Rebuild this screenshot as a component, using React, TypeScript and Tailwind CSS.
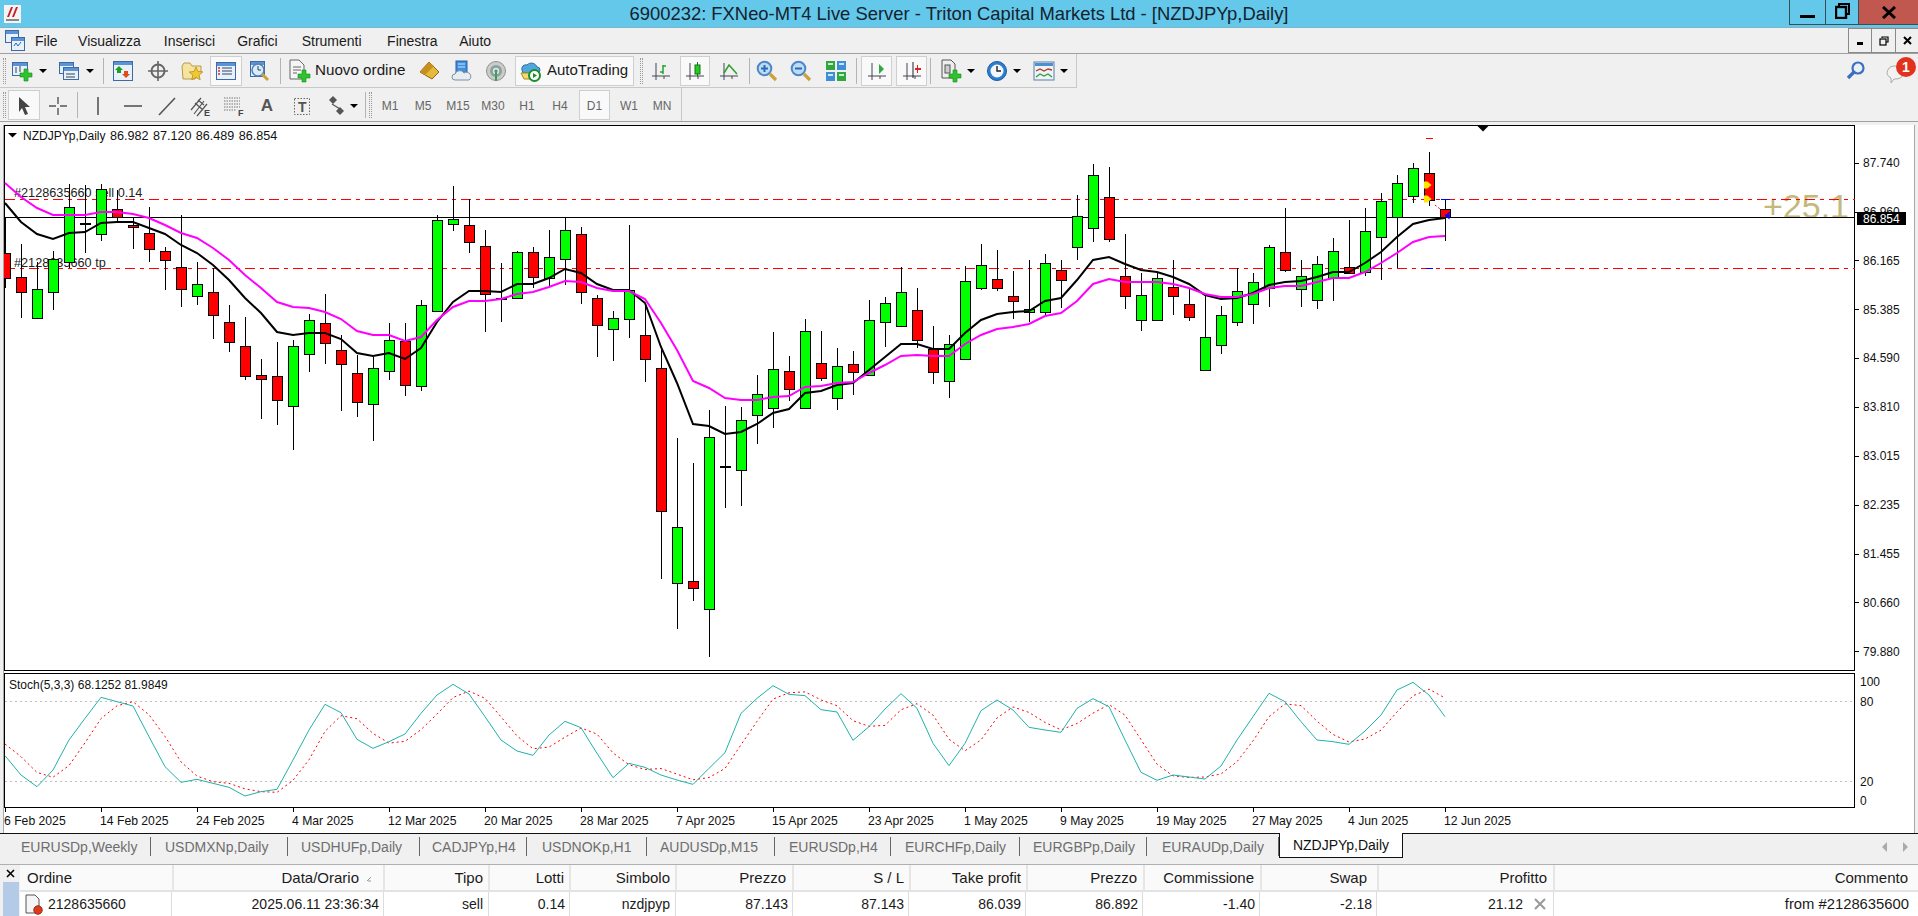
import React from "react";

type C = ["g" | "r" | "d", number, number, number, number];
const candles: C[] = [
  ["r",253,278,218,288],["r",277,292,244,318],["g",289,318,262,319],["g",259,292,251,310],["g",207,262,184,268],["d",224,224,185,253],["g",189,234,184,241],["r",209,217,190,222],["r",225,227,218,249],["r",233,249,207,262],
  ["r",251,260,247,290],["r",267,289,215,307],["g",284,296,262,305],["r",292,315,268,339],["r",322,342,305,352],["r",346,376,317,380],["r",375,379,359,419],["r",376,400,342,425],["g",346,406,340,450],["g",320,354,314,372],
  ["r",323,343,294,364],["r",350,364,335,411],["r",373,402,355,417],["g",368,404,357,441],["g",340,371,323,380],["r",341,385,323,396],["g",305,386,300,391],["g",220,311,215,311],["g",219,224,186,231],["r",225,242,199,253],
  ["r",246,294,230,332],["d",299,299,263,322],["g",252,298,251,298],["r",252,277,247,288],["g",257,278,230,287],["g",230,259,218,285],["r",234,292,227,304],["r",298,325,295,357],["g",318,329,311,361],["g",290,319,225,338],
  ["r",335,359,303,382],["r",368,511,350,579],["g",527,583,438,629],["r",581,588,463,601],["g",437,609,410,657],["d",467,467,406,508],["g",420,470,407,506],["g",394,415,375,444],["g",369,408,332,428],["r",371,389,356,401],
  ["g",331,408,319,409],["r",363,378,331,381],["g",366,398,348,410],["r",364,372,351,395],["g",320,375,300,376],["g",303,322,297,347],["g",292,326,267,326],["r",310,340,288,348],["r",349,372,326,384],["g",344,381,335,398],
  ["g",281,359,266,359],["g",265,288,244,290],["r",279,288,250,291],["r",296,301,271,319],["g",309,312,260,322],["g",263,312,254,315],["r",270,280,260,308],["g",216,247,195,260],["g",175,228,164,242],["r",197,239,167,242],
  ["r",276,296,234,309],["g",295,320,273,331],["g",278,320,273,320],["r",287,296,260,315],["r",304,317,288,321],["g",337,370,296,370],["g",315,345,306,354],["g",291,322,268,326],["g",282,304,273,324],["g",247,288,245,307],
  ["r",252,270,208,272],["g",276,289,260,307],["g",264,300,256,309],["g",251,278,238,301],["r",267,273,220,273],["g",231,272,208,276],["g",201,237,193,280],["g",183,217,175,268],["g",168,196,163,203],["r",173,200,152,206],
  ["r",209,217,200,241],
];
const ma1 = [203,222,234,239,233,232,223,222,222,228,234,245,253,265,280,298,313,332,335,333,333,339,353,356,353,359,348,322,302,291,291,292,284,284,278,269,273,284,290,290,303,347,383,424,426,434,432,424,413,409,393,391,385,383,370,357,344,344,349,349,333,320,314,312,311,301,298,280,260,257,264,270,272,277,284,295,299,298,293,285,282,281,277,272,272,263,252,237,224,220,218];
const ma2 = [183,197,208,215,215,215,212,212,214,218,225,233,238,248,260,275,288,302,307,308,312,319,331,335,335,341,337,320,307,301,301,299,294,292,287,281,282,288,291,291,299,323,350,381,388,398,400,400,397,396,387,386,383,382,373,365,356,355,356,356,344,335,329,327,324,316,313,301,284,279,282,282,282,284,288,294,297,297,294,288,286,286,282,278,278,272,263,253,242,237,236];
const stoch = [231,238,287,345,380,330,240,175,112,125,138,230,320,367,358,370,382,408,395,388,300,210,133,158,238,265,245,222,160,105,73,102,170,240,273,286,225,184,203,280,353,310,322,345,360,373,325,278,160,115,77,103,107,149,156,241,200,147,101,145,250,317,250,152,120,150,202,210,217,145,116,140,240,337,361,345,351,357,318,240,170,100,125,185,240,245,253,213,165,90,67,105,170];
const bx = (i: number) => 5 + 16 * i;
const toPts = (a: number[]) => a.map((y, i) => `${bx(i)},${y}`).join(" ");
const kLine = stoch.slice(2).map((v, i) => `${bx(i)},${660 + v / 3}`).join(" ");
const dLine = stoch.slice(2).map((_, i) => `${bx(i)},${660 + (stoch[i] + stoch[i + 1] + stoch[i + 2]) / 9}`).join(" ");
const prices = ["87.740","86.960","86.165","85.385","84.590","83.810","83.015","82.235","81.455","80.660","79.880"];
const dates = ["6 Feb 2025","14 Feb 2025","24 Feb 2025","4 Mar 2025","12 Mar 2025","20 Mar 2025","28 Mar 2025","7 Apr 2025","15 Apr 2025","23 Apr 2025","1 May 2025","9 May 2025","19 May 2025","27 May 2025","4 Jun 2025","12 Jun 2025"];

function Chart() {
  return (
    <svg width="1910" height="708" viewBox="4 125 1910 708" className="block bg-white">
      <rect x="4.5" y="125.5" width="1850" height="545" fill="none" stroke="#000" shapeRendering="crispEdges" />
      <rect x="4.5" y="673.5" width="1850" height="134" fill="none" stroke="#000" shapeRendering="crispEdges" />
      <text x="23" y="140" fontSize="12" fill="#111">NZDJPYp,Daily</text>
      <text x="110" y="140" fontSize="12.6" fill="#111" wordSpacing="0.9">86.982 87.120 86.489 86.854</text>
      <path d="M8 133h9l-4.5 4.5z" fill="#000" />
      <path d="M1477.5 126h11l-5.5 5.5z" fill="#000" />
      <text x="14" y="197" fontSize="12.7" fill="#222">#2128635660 sell 0.14</text>
      <text x="14" y="267" fontSize="12.7" fill="#222">#2128635660 tp</text>
      <text x="1763" y="218" fontSize="34" fill="#c4b97a">+25.1</text>
      <g shapeRendering="crispEdges">
        <line x1="5" x2="1855" y1="199.5" y2="199.5" stroke="#f00" strokeDasharray="10 5 4 5" />
        <line x1="5" x2="1855" y1="268.5" y2="268.5" stroke="#f00" strokeDasharray="10 5 4 5" />
        <line x1="5" x2="1855" y1="217.5" y2="217.5" stroke="#000" />
        {candles.map((c, i) => {
          const x = bx(i);
          return (
            <g key={i}>
              <line x1={x + 0.5} x2={x + 0.5} y1={c[3]} y2={c[4]} stroke="#000" />
              {c[0] === "d" ? (
                <rect x={x - 5} y={c[1] - 1} width="11" height="2" fill="#000" />
              ) : (
                <rect x={x - 4.5} y={c[1] + 0.5} width="10" height={Math.max(c[2] - c[1], 1)} fill={c[0] === "g" ? "#00ff00" : "#ff0000"} stroke="#000" />
              )}
            </g>
          );
        })}
        <rect x="1426" y="138" width="7" height="1" fill="#f00" />
        <rect x="1441" y="199" width="9" height="1" fill="#00f" />
        <rect x="1426" y="268" width="7" height="1" fill="#00f" />
      </g>
      <polyline points={toPts(ma1)} fill="none" stroke="#000" strokeWidth="2" />
      <polyline points={toPts(ma2)} fill="none" stroke="#ff00ff" strokeWidth="2" />
      <path d="M1424 181.5h3.5l4 3.5-4 3.5H1424z" fill="#ffe600" />
      <path d="M1424 195.5h3.5l4 3.5-4 3.5H1424z" fill="#ffe600" />
      <line x1="1435" y1="205" x2="1444" y2="212" stroke="#f00" strokeDasharray="2 2" />
      <path d="M1444.5 215.5l5-4v8z" fill="#00f" />
      <g shapeRendering="crispEdges">
        {prices.map((p, k) => (
          <rect key={p} x="1855" y={Math.round(162.7 + 48.85 * k)} width="4" height="1" fill="#000" />
        ))}
      </g>
      {prices.map((p, k) => (
        <text key={p} x="1863" y={167 + 48.85 * k} fontSize="12" fill="#111">{p}</text>
      ))}
      <rect x="1857" y="212" width="49" height="13" fill="#000" />
      <text x="1863" y="223" fontSize="12" fill="#fff">86.854</text>

      <text x="9" y="689" fontSize="12" fill="#111">Stoch(5,3,3) 68.1252 81.9849</text>
      <g shapeRendering="crispEdges">
        <line x1="5" x2="1855" y1="701.5" y2="701.5" stroke="#c0c0c0" strokeDasharray="2 3" />
        <line x1="5" x2="1855" y1="781.5" y2="781.5" stroke="#c0c0c0" strokeDasharray="2 3" />
      </g>
      <polyline points={dLine} fill="none" stroke="#f00" strokeWidth="1" strokeDasharray="2 3" />
      <polyline points={kLine} fill="none" stroke="#20b2aa" strokeWidth="1" />
      {[["100",686],["80",705.5],["20",785.5],["0",805]].map(([t, y]) => (
        <text key={t} x="1860" y={y} fontSize="12" fill="#111">{t}</text>
      ))}
      {dates.map((d, k) => (
        <g key={d}>
          <rect x={5 + 96 * k} y="808" width="1" height="4" fill="#000" />
          <text x={4 + 96 * k} y="824.5" fontSize="12.2" fill="#111">{d}</text>
        </g>
      ))}
    </svg>
  );
}

const Ic = ({ children, w = 22, h = 22 }: { children: React.ReactNode; w?: number; h?: number }) => (
  <svg width={w} height={h} viewBox={`0 0 ${w} ${h}`}>{children}</svg>
);
const Plus = ({ x, y }: { x: number; y: number }) => (
  <path transform={`translate(${x} ${y})`} d="M4 0h4v4h4v4H8v4H4V8H0V4h4z" fill="#2fc42f" stroke="#118a11" strokeWidth=".6" />
);
const Win = ({ x, y, w, h }: { x: number; y: number; w: number; h: number }) => (
  <g>
    <rect x={x + 0.5} y={y + 0.5} width={w} height={h} fill="#e8f1fb" stroke="#3d6aa5" />
    <rect x={x + 1} y={y + 1} width={w - 1} height="3" fill="#5b93d5" />
  </g>
);
const Arrow = () => <span className="w-0 h-0 border-x-[4px] border-x-transparent border-t-[4px] border-t-black" />;
const Bars = () => (
  <g stroke="#445" fill="none"><path d="M6 3v15M2 16h18M14 16v3M6 18v2" /></g>
);

const NewChart = () => <Ic><Win x={1} y={2} w={15} h={13} /><path d="M5 7v6M9 6v6" stroke="#345" /><Plus x={9} y={9} /></Ic>;
const Profiles = () => <Ic><Win x={1} y={2} w={14} h={11} /><Win x={5} y={7} w={15} h={12} /><path d="M8 14h9M8 17h9" stroke="#345" /></Ic>;
const Market = () => <Ic><Win x={1} y={1} w={19} h={19} /><path d="M7 6l4 4H9v3H5v-3H3z" fill="#1fa01f" /><path d="M14 18l-4-4h2v-3h4v3h2z" fill="#e64a1a" /></Ic>;
const Navigator = () => <Ic><circle cx="11" cy="11" r="6.5" fill="none" stroke="#666" strokeWidth="2" /><path d="M11 1v20M1 11h20" stroke="#666" strokeWidth="1.6" /></Ic>;
const Folder = () => <Ic><path d="M1 6l2-3h6l2 3h9v6l-6 7H2z" fill="#f7e3a0" stroke="#b89a45" /><path d="M15 7l2 4.4 4.8.5-3.6 3.2 1 4.7-4.2-2.4-4.2 2.4 1-4.7L8.2 12l4.8-.5z" fill="#f2c731" stroke="#a8861c" strokeWidth=".7" /></Ic>;
const Terminal = () => <Ic><Win x={1} y={2} w={19} h={17} /><path d="M3 8h2M3 11h2M3 14h2" stroke="#c33" strokeWidth="1.4" /><path d="M7 8h10M7 11h10M7 14h10" stroke="#346" /></Ic>;
const ClockMag = () => <Ic><Win x={2} y={1} w={14} h={15} /><circle cx="10" cy="10" r="6" fill="#d8ecfb" stroke="#4f7fb5" strokeWidth="1.5" /><path d="M10 6v4h3" stroke="#345" fill="none" /><path d="M14 14l6 6" stroke="#c9a23a" strokeWidth="3" /></Ic>;
const NewOrder = () => <Ic w={24} h={24}><path d="M3 1h9l5 5v14H3z" fill="#f5f5f5" stroke="#666" /><path d="M6 8h8M6 11h8M6 14h4" stroke="#666" /><Plus x={11} y={11} /></Ic>;
const Gold = () => <Ic><path d="M11 2l10 10-7 7L2 12z" fill="#e6b93a" stroke="#8a651a" /><path d="M11 2l-9 10 5 3 9-9z" fill="#c98f1d" /></Ic>;
const Cloud = () => <Ic><rect x="5" y="1" width="11" height="14" fill="#3f8fe0" stroke="#2a5f9f" /><path d="M7 4h7M7 7h7" stroke="#cfe6fb" /><path d="M4 20a3 3 0 010-6 5 5 0 019-1 4 4 0 015 7z" fill="#e9edf2" stroke="#7890a8" /></Ic>;
const Signal = () => <Ic><circle cx="11" cy="11" r="9.5" fill="#c9cdc9" stroke="#8f948f" /><circle cx="11" cy="11" r="6" fill="#8fa09a" /><circle cx="11" cy="11" r="3.2" fill="#d8e8e0" /><circle cx="11" cy="11" r="1.6" fill="#3f8f9f" /><path d="M11 12v9" stroke="#35a05a" strokeWidth="2" /></Ic>;
const Auto = () => <Ic><path d="M3 10a4 4 0 015-5 6 6 0 0110 2 3 3 0 010 6H4z" fill="#4fa8dc" stroke="#2a6e9f" /><path d="M2 13l3 6h8l3-6z" fill="#f5d96a" stroke="#a88a25" /><circle cx="15.5" cy="15.5" r="5.5" fill="#fff" stroke="#1a8f2f" strokeWidth="2" /><path d="M14 13l4 2.5-4 2.5z" fill="#1a8f2f" /></Ic>;
const BarCh = () => <Ic><Bars /><path d="M13 5v9M13 6h3M13 12h-3" stroke="#2a9f2a" strokeWidth="1.5" /></Ic>;
const Candle = () => <Ic><Bars /><rect x="11" y="5" width="5" height="9" fill="#1fd01f" stroke="#1a6e1a" /><path d="M13.5 2v3M13.5 14v2" stroke="#1a6e1a" /></Ic>;
const LineCh = () => <Ic><Bars /><path d="M6 13l5-8 8 9" fill="none" stroke="#2a9f2a" strokeWidth="1.5" /></Ic>;
const Zoom = ({ plus }: { plus?: boolean }) => <Ic><circle cx="8.5" cy="8.5" r="6.8" fill="#bcdcf5" stroke="#4f86c8" strokeWidth="2" /><path d="M5 8.5h7" stroke="#2a6ab5" strokeWidth="2" />{plus && <path d="M8.5 5v7" stroke="#2a6ab5" strokeWidth="2" />}<path d="M14 14l6 6" stroke="#c9a23a" strokeWidth="3.2" /></Ic>;
const Tile = () => <Ic><rect x="1" y="1" width="9" height="9" fill="#2fa83f" /><rect x="12" y="1" width="9" height="9" fill="#3f8fd8" /><rect x="1" y="12" width="9" height="9" fill="#3f8fd8" /><rect x="12" y="12" width="9" height="9" fill="#2fa83f" /><path d="M3 4h5M14 4h5M3 15h5M14 15h5" stroke="#fff" strokeWidth="1.4" /></Ic>;
const Shift = () => <Ic><Bars /><path d="M13 4l5 5-5 5z" fill="#2fa83f" /></Ic>;
const AutoS = () => <Ic><Bars /><path d="M12 2v16" stroke="#223" /><path d="M14 8h2V5h1v3h3v2h-3v3h-1v-3h-2z" fill="#e02020" /></Ic>;
const Clock = () => <Ic><circle cx="11" cy="11" r="9.5" fill="#2a7fd0" stroke="#1a5a9f" /><circle cx="11" cy="11" r="6.5" fill="#f4f8fc" /><path d="M11 6v5h4" fill="none" stroke="#222" strokeWidth="1.4" /></Ic>;
const Tpl = () => <Ic><rect x="1" y="2" width="20" height="18" fill="#eef3f8" stroke="#5a7fa8" /><rect x="2" y="3" width="18" height="3" fill="#4f8fd0" /><path d="M3 11l4-2 4 2 4-2 4 1" fill="none" stroke="#b03a2a" strokeWidth="1.3" /><path d="M3 17l4-3 4 2 4-2 4 3" fill="none" stroke="#2a9f3a" strokeWidth="1.3" /></Ic>;
const NewDoc = () => <Ic w={22} h={24}><path d="M2 1h9l4 4v14H2z" fill="#eee" stroke="#555" /><rect x="5" y="6" width="5" height="8" fill="#ccc" stroke="#555" /><Plus x={9} y={11} /></Ic>;

const BG = "flex items-center justify-center h-[30px]";
const BG2 = "flex items-center justify-center h-[30px] pt-[3px]";
const Grip = ({ cl }: { cl: string }) => <span className={`w-[3px] h-[26px] border-x border-dotted border-[#9a9a9a] ${cl}`} />;
const Sep = ({ cl }: { cl: string }) => <span className={`w-px h-[26px] bg-[#b4b4b4] ${cl}`} />;
const pressed = "bg-[#f9f9f9] border border-[#cfcfcf]";
const Tf = ({ t, cl }: { t: string; cl: string }) => (
  <span className={`flex items-center justify-center h-[30px] pt-[2px] text-[12px] text-[#666] ${cl}`}>{t}</span>
);
const G = "#555";

const tabs: [string, string][] = [
  ["EURUSDp,Weekly","w-[147px] pl-[17px]"],["USDMXNp,Daily","w-[137px] pl-[14px]"],["USDHUFp,Daily","w-[132px] pl-[13px]"],["CADJPYp,H4","w-[107px] pl-[12px]"],["USDNOKp,H1","w-[120px] pl-[15px]"],["AUDUSDp,M15","w-[128px] pl-[13px]"],["EURUSDp,H4","w-[116px] pl-[14px]"],["EURCHFp,Daily","w-[129px] pl-[14px]"],["EURGBPp,Daily","w-[127px] pl-[13px]"],["EURAUDp,Daily","w-[132px] pl-[15px]"],
];
const HC = "flex items-center justify-end pt-[2px] border-r-[2px] border-[#e6e6e6]";
const RC = "flex items-center justify-end border-r border-[#dcdcdc]";

export default function App() {
  return (
    <div className="w-screen h-screen overflow-hidden flex flex-col bg-[#f0f0f0] text-[14px] text-[#1a1a1a] [font-family:'Liberation_Sans',Arial,sans-serif]">
      {/* Title bar */}
      <div className="h-[28px] shrink-0 grid grid-cols-[1fr_auto_1fr] bg-[#63c8ea] border-b border-[#7fb4c8]">
        <div className="flex items-center pl-[4px]">
          <svg width="17" height="18" viewBox="0 0 17 18"><rect width="17" height="18" fill="#f4f4f4" /><path d="M3 12L7 2h2L5 12zM8 12l4-10h2l-4 10z" fill="#c8202a" /><rect x="2" y="14" width="13" height="2" fill="#888" /></svg>
        </div>
        <div className="flex items-center text-[18.4px] text-[#14232e] whitespace-nowrap">6900232: FXNeo-MT4 Live Server - Triton Capital Markets Ltd - [NZDJPYp,Daily]</div>
        <div className="flex justify-end items-start">
          <span className="w-[36px] h-[25px] border-l border-b border-[#3b4d58] flex items-end justify-center pb-[6px]"><span className="w-[15px] h-[3px] bg-black" /></span>
          <span className="w-[33px] h-[25px] border-l border-b border-[#3b4d58] flex items-start justify-center pt-[3px]">
            <svg width="15" height="16" viewBox="0 0 15 16"><path d="M4 3V1h10v10h-3" fill="none" stroke="#000" strokeWidth="2" /><rect x="1" y="4" width="10" height="11" fill="none" stroke="#000" strokeWidth="2.4" /></svg>
          </span>
          <span className="w-[60px] h-[25px] border-l border-b border-[#3b4d58] bg-[#c0584f] flex items-center justify-center">
            <svg width="14" height="13" viewBox="0 0 14 13"><path d="M1 1l12 11M13 1L1 12" stroke="#000" strokeWidth="3" /></svg>
          </span>
        </div>
      </div>
      {/* Menu */}
      <div className="h-[26px] shrink-0 flex items-center border-b border-[#a0a0a0]">
        <svg className="ml-[5px]" width="20" height="21" viewBox="0 0 20 21"><Win x={0} y={0} w={13} h={12} /><Win x={6} y={7} w={13} h={13} /><path d="M9 16l2-3 2 3 3-4" fill="none" stroke="#2a6ab5" /></svg>
        <span className="ml-[10px] pt-[2px]">File</span>
        <span className="ml-[20.5px] pt-[2px]">Visualizza</span>
        <span className="ml-[23px] pt-[2px]">Inserisci</span>
        <span className="ml-[22px] pt-[2px]">Grafici</span>
        <span className="ml-[24px] pt-[2px]">Strumenti</span>
        <span className="ml-[25.5px] pt-[2px]">Finestra</span>
        <span className="ml-[21.5px] pt-[2px]">Aiuto</span>
        <div className="ml-auto flex h-[25px] self-start">
          <span className="w-[24px] border border-[#8a8a8a] flex items-end justify-center pb-[7px]"><span className="w-[6px] h-[3px] bg-black" /></span>
          <span className="w-[24px] border-y border-r border-[#8a8a8a] flex items-center justify-center">
            <svg width="10" height="10" viewBox="0 0 10 10"><path d="M3 2V1h6v5H7" fill="none" stroke="#000" strokeWidth="1.2" /><rect x="1" y="3" width="6" height="6" fill="none" stroke="#000" strokeWidth="1.2" /></svg>
          </span>
          <span className="w-[22px] border-y border-[#8a8a8a] flex items-center justify-center">
            <svg width="9" height="9" viewBox="0 0 9 9"><path d="M1 1l7 7M8 1L1 8" stroke="#000" strokeWidth="2" /></svg>
          </span>
        </div>
      </div>
      {/* Toolbar 1 */}
      <div className="h-[34px] shrink-0 flex">
        <div className="w-[1077px] flex items-center border-r border-b border-[#c8c8c8]">
          <Grip cl="ml-[3px]" />
          <span className={`${BG} ml-[2px] w-[28px]`}><NewChart /></span>
          <span className={`${BG} w-[14px]`}><Arrow /></span>
          <span className={`${BG} ml-[4px] w-[30px]`}><Profiles /></span>
          <span className={`${BG} w-[12px]`}><Arrow /></span>
          <Sep cl="ml-[7px]" />
          <span className={`${BG} ml-[4px] w-[30px]`}><Market /></span>
          <span className={`${BG} ml-[5px] w-[30px]`}><Navigator /></span>
          <span className={`${BG} ml-[4px] w-[30px]`}><Folder /></span>
          <span className={`${BG} ml-[3px] w-[32px] ${pressed}`}><Terminal /></span>
          <span className={`${BG} ml-[2px] w-[30px]`}><ClockMag /></span>
          <Sep cl="ml-[6px]" />
          <span className={`${BG} ml-[4px] w-[125px] justify-start text-[15.2px] whitespace-nowrap`}><span className="ml-[2px] mr-[4px] flex"><NewOrder /></span>Nuovo ordine</span>
          <span className={`${BG} ml-[4px] w-[30px]`}><Gold /></span>
          <span className={`${BG} ml-[3px] w-[30px]`}><Cloud /></span>
          <span className={`${BG} ml-[4px] w-[30px]`}><Signal /></span>
          <span className={`${BG} ml-[4px] w-[119px] justify-start text-[15px] whitespace-nowrap ${pressed}`}><span className="ml-[3px] mr-[6px] flex"><Auto /></span>AutoTrading</span>
          <Grip cl="ml-[6px]" />
          <span className={`${BG} ml-[3px] w-[30px]`}><BarCh /></span>
          <span className={`${BG} ml-[4px] w-[30px] ${pressed}`}><Candle /></span>
          <span className={`${BG} ml-[4px] w-[30px]`}><LineCh /></span>
          <Sep cl="ml-[5px]" />
          <span className={`${BG} ml-[2px] w-[30px]`}><Zoom plus /></span>
          <span className={`${BG} ml-[4px] w-[30px]`}><Zoom /></span>
          <span className={`${BG} ml-[5px] w-[30px]`}><Tile /></span>
          <Sep cl="ml-[5px]" />
          <span className={`${BG} ml-[4px] w-[31px] ${pressed}`}><Shift /></span>
          <span className={`${BG} ml-[4px] w-[31px] ${pressed}`}><AutoS /></span>
          <Sep cl="ml-[3px]" />
          <span className={`${BG} ml-[5px] w-[30px]`}><NewDoc /></span>
          <span className={`${BG} w-[10px]`}><Arrow /></span>
          <span className={`${BG} ml-[6px] w-[30px]`}><Clock /></span>
          <span className={`${BG} w-[10px]`}><Arrow /></span>
          <span className={`${BG} ml-[7px] w-[30px]`}><Tpl /></span>
          <span className={`${BG} w-[10px]`}><Arrow /></span>
        </div>
        <div className="flex-1 flex items-center justify-end">
          <svg className="mr-[20px]" width="20" height="22" viewBox="0 0 20 22"><circle cx="12" cy="8" r="5.5" fill="#e8f1fb" stroke="#3d6fc0" strokeWidth="2.2" /><path d="M8 12l-6 6" stroke="#3d6fc0" strokeWidth="3.4" /></svg>
          <span className="relative w-[30px] h-[30px] mr-[2px]">
            <svg className="absolute left-0 top-[8px]" width="22" height="22" viewBox="0 0 22 22"><path d="M10 2a8 6.5 0 010 13H8l-3 4v-5A8 6.5 0 0110 2z" fill="#f2f2f2" stroke="#aaa" /></svg>
            <span className="absolute right-0 top-[1px] w-[20px] h-[20px] rounded-full bg-[#e2321e] text-white text-[14px] font-bold flex items-center justify-center">1</span>
          </span>
        </div>
      </div>
      {/* Toolbar 2 */}
      <div className="h-[33px] shrink-0 flex">
        <div className="w-[682px] flex items-center border-r border-[#c8c8c8]">
          <Grip cl="ml-[3px]" />
          <span className={`${BG2} ml-[2px] w-[32px] ${pressed}`}><Ic><path d="M6 2l11 10h-5l3 7-3 1-3-7-3 4z" fill="#444" /></Ic></span>
          <span className={`${BG2} ml-[2px] w-[32px]`}><Ic><path d="M11 2v7M11 13v7M2 11h7M13 11h7" stroke={G} strokeWidth="1.4" /></Ic></span>
          <Sep cl="ml-[3px]" />
          <span className={`${BG2} ml-[5px] w-[30px]`}><Ic><path d="M11 2v18" stroke={G} strokeWidth="1.6" /></Ic></span>
          <span className={`${BG2} ml-[5px] w-[30px]`}><Ic><path d="M2 11h18" stroke={G} strokeWidth="1.6" /></Ic></span>
          <span className={`${BG2} ml-[4px] w-[30px]`}><Ic><path d="M3 20L19 3" stroke={G} strokeWidth="1.6" /></Ic></span>
          <span className={`${BG2} ml-[3px] w-[30px]`}><Ic><path d="M2 15L12 3M5 19L15 6M8 21L18 9M6 8l8 7M9 5l6 5" stroke={G} strokeWidth="1.2" fill="none" /><text x="15" y="21" fontSize="9" fontWeight="700" fill="#444">E</text></Ic></span>
          <span className={`${BG2} ml-[4px] w-[30px]`}><Ic><path d="M1 3h16M1 6h16M1 9h16M1 12h16M1 15h12" stroke="#777" strokeDasharray="1.5 1" /><text x="15" y="21" fontSize="9" fontWeight="700" fill="#444">F</text></Ic></span>
          <span className={`${BG2} ml-[3px] w-[30px] text-[17px] font-bold text-[#555]`}>A</span>
          <span className={`${BG2} ml-[5px] w-[30px]`}><Ic><rect x="3.5" y="3.5" width="15" height="16" fill="none" stroke="#666" strokeDasharray="1.5 1.5" /><text x="7" y="17" fontSize="14" fontWeight="700" fill="#555">T</text></Ic></span>
          <span className={`${BG2} ml-[7px] w-[24px]`}><Ic><path d="M8 1l4 4-4 4-4-4zM15 12l4 4-4 4-4-4z" fill="#555" /><path d="M7 9l8 5" stroke="#555" strokeWidth="1.2" /></Ic></span>
          <span className={`${BG2} ml-[1px] w-[10px]`}><Arrow /></span>
          <Sep cl="ml-[6px]" />
          <Grip cl="ml-[3px]" />
          <Tf t="M1" cl="ml-[3px] w-[30px]" />
          <Tf t="M5" cl="ml-[3px] w-[30px]" />
          <Tf t="M15" cl="ml-[5px] w-[30px]" />
          <Tf t="M30" cl="ml-[5px] w-[30px]" />
          <Tf t="H1" cl="ml-[4px] w-[30px]" />
          <Tf t="H4" cl="ml-[3px] w-[30px]" />
          <Tf t="D1" cl={`ml-[4px] w-[31px] ${pressed}`} />
          <Tf t="W1" cl="ml-[4px] w-[30px]" />
          <Tf t="MN" cl="ml-[3px] w-[30px]" />
        </div>
      </div>
      {/* Chart */}
      <div className="h-[712px] shrink-0 border-t border-[#a0a0a0] pt-[3px] pl-[3px]">
        <div className="w-[1912px] h-full border-x border-[#a8a8a8]">
          <Chart />
        </div>
      </div>
      {/* Tabs */}
      <div className="h-[26px] shrink-0 flex border-t border-[#111] pl-[4px] items-stretch">
        {tabs.map(([t, w]) => (
          <div key={t} className={`${w} flex items-center`}>
            <span className="flex-1 text-left pt-px text-[#6e6e6e] whitespace-nowrap">{t}</span>
            <span className="w-px h-[19px] bg-[#666]" />
          </div>
        ))}
        <div className="w-[124px] bg-white border-x border-b border-[#111] -mt-px flex items-center justify-center pt-px whitespace-nowrap text-[#111] h-[25px]">NZDJPYp,Daily</div>
        <div className="ml-auto flex items-center gap-[16px] pr-[10px]">
          <span className="w-0 h-0 border-y-[5px] border-y-transparent border-r-[5px] border-r-[#aaa]" />
          <span className="w-0 h-0 border-y-[5px] border-y-transparent border-l-[5px] border-l-[#aaa]" />
        </div>
      </div>
      {/* Terminal */}
      <div className="h-[6px] shrink-0 border-b border-[#b0b0b0]" />
      <div className="flex-1 flex min-h-0">
        <div className="w-[20px] shrink-0 flex flex-col">
          <div className="h-[17px] flex items-center justify-center">
            <svg width="9" height="9" viewBox="0 0 9 9"><path d="M1 1l7 7M8 1L1 8" stroke="#000" strokeWidth="1.6" /></svg>
          </div>
          <div className="flex-1 ml-[3px] mr-px bg-[#b3cbe6]" />
        </div>
        <div className="flex-1 flex flex-col min-w-0">
          <div className="h-[27px] shrink-0 flex bg-[#fafafa] border-b-[2px] border-[#e3e3e3] text-[15px]">
            <div className="w-[154px] pl-[7px] flex items-center pt-[2px] border-r-[2px] border-[#e6e6e6]">Ordine</div>
            <div className={`w-[211px] pr-[11px] ${HC}`}>Data/Orario<svg className="ml-[7px]" width="6" height="6" viewBox="0 0 6 6"><path d="M1 5l4-4M2 5h3" stroke="#999" /></svg></div>
            <div className={`w-[105px] pr-[5px] ${HC}`}>Tipo</div>
            <div className={`w-[81px] pr-[5px] ${HC}`}>Lotti</div>
            <div className={`w-[106px] pr-[5px] ${HC}`}>Simbolo</div>
            <div className={`w-[117px] pr-[6px] ${HC}`}>Prezzo</div>
            <div className={`w-[117px] pr-[5px] ${HC}`}>S / L</div>
            <div className={`w-[117px] pr-[5px] ${HC}`}>Take profit</div>
            <div className={`w-[117px] pr-[6px] ${HC}`}>Prezzo</div>
            <div className={`w-[117px] pr-[6px] ${HC}`}>Commissione</div>
            <div className={`w-[117px] pr-[10px] ${HC}`}>Swap</div>
            <div className={`w-[176px] pr-[6px] ${HC}`}>Profitto</div>
            <div className="flex-1 pr-[10px] pt-[2px] flex items-center justify-end">Commento</div>
          </div>
          <div className="flex-1 flex bg-white">
            <div className="w-[152px] pl-[5px] flex items-center gap-[5px] border-r border-[#dcdcdc]">
              <svg width="18" height="21" viewBox="0 0 18 21"><path d="M1 1h9l4 4v14H1z" fill="#f5f5f5" stroke="#555" /><circle cx="13" cy="16" r="4.2" fill="#e03a1a" stroke="#8a2a1a" /></svg>
              2128635660
            </div>
            <div className={`w-[212px] pr-[4px] ${RC}`}>2025.06.11 23:36:34</div>
            <div className={`w-[105px] pr-[5px] ${RC}`}>sell</div>
            <div className={`w-[81px] pr-[4px] ${RC}`}>0.14</div>
            <div className={`w-[106px] pr-[5px] ${RC}`}>nzdjpyp</div>
            <div className={`w-[117px] pr-[4px] ${RC}`}>87.143</div>
            <div className={`w-[116px] pr-[4px] ${RC}`}>87.143</div>
            <div className={`w-[117px] pr-[4px] ${RC}`}>86.039</div>
            <div className={`w-[117px] pr-[4px] ${RC}`}>86.892</div>
            <div className={`w-[117px] pr-[4px] ${RC}`}>-1.40</div>
            <div className={`w-[117px] pr-[4px] ${RC}`}>-2.18</div>
            <div className={`w-[177px] pr-[7px] gap-[11px] ${RC}`}>21.12
              <svg width="12" height="12" viewBox="0 0 12 12"><path d="M1 1l10 10M11 1L1 11" stroke="#999" strokeWidth="2" /></svg>
            </div>
            <div className="flex-1 pr-[9px] flex items-center justify-end text-[14.8px]">from #2128635600</div>
          </div>
        </div>
      </div>
    </div>
  );
}
